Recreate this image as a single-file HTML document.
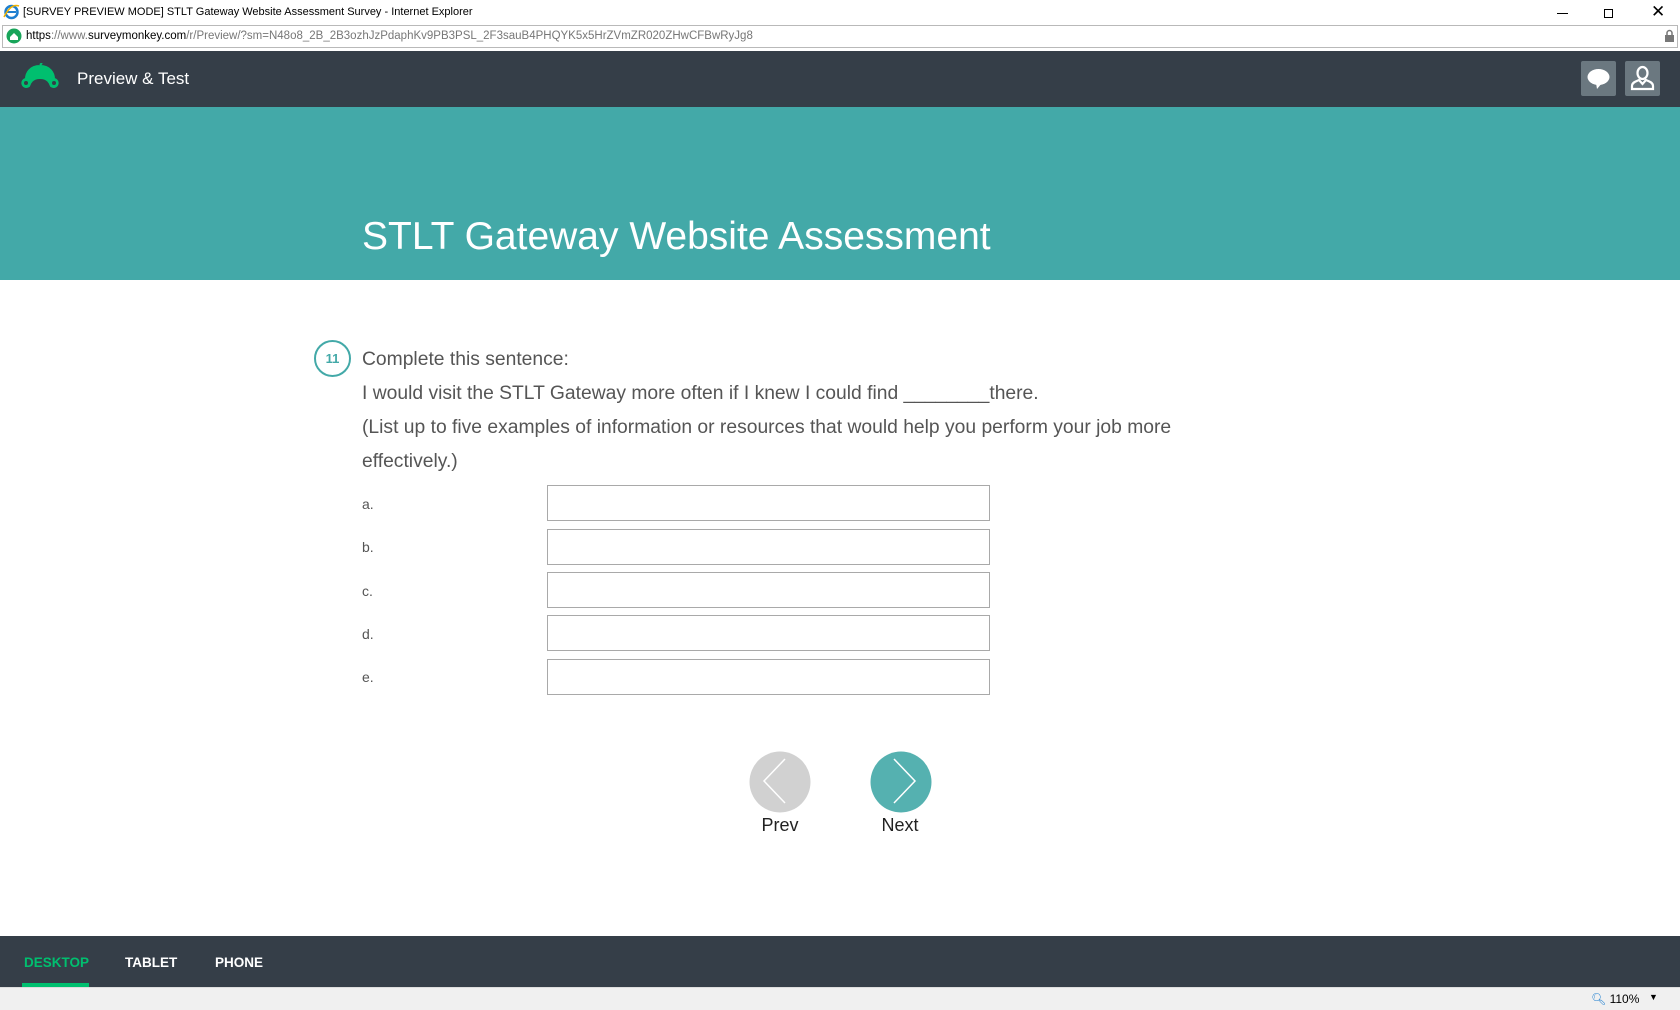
<!DOCTYPE html>
<html><head><meta charset="utf-8"><style>
*{margin:0;padding:0;box-sizing:border-box}
body{width:1680px;height:1010px;overflow:hidden;font-family:"Liberation Sans",sans-serif;background:#fff;position:relative}
.abs{position:absolute}
.tb{top:0;left:0;width:1680px;height:25px;background:#fff;font-size:11px;color:#000}
.ab{top:25px;left:2px;width:1676px;height:23px;border:1px solid #b9b9b9;font-size:11.5px;color:#777}
.nav{top:51px;left:0;width:1680px;height:56px;background:#353e48}
.hero{top:107px;left:0;width:1680px;height:173px;background:#43a9a8}
.q{left:362px;font-size:19.3px;color:#555;font-weight:300;white-space:nowrap}
.lab{left:362px;font-size:14px;color:#555}
.in{left:547px;width:443px;height:36px;border:1px solid #a9a9a9;background:#fff}
.foot{top:936px;left:0;width:1680px;height:51px;background:#353e48}
.st{top:987px;left:0;width:1680px;height:23px;background:#f0f0f0;border-top:1px solid #ddd}
.tab{top:955px;font-size:13.5px;font-weight:bold;color:#fff}
</style></head><body>
<div class="abs tb">
 <svg class="abs" style="left:3px;top:3px" width="17" height="17" viewBox="0 0 17 17"><circle cx="8.5" cy="9" r="6" fill="none" stroke="#1e7fd0" stroke-width="2.5"/><rect x="4" y="8" width="9" height="2" fill="#1e7fd0"/><path d="M1 14 Q8 0 16 3" stroke="#f4b400" stroke-width="1.5" fill="none"/></svg>
 <div class="abs" style="left:23px;top:6px">[SURVEY PREVIEW MODE] STLT Gateway Website Assessment Survey - Internet Explorer</div>
 <div class="abs" style="left:1557px;top:13px;width:11px;height:1px;background:#000"></div>
 <div class="abs" style="left:1604px;top:9px;width:9px;height:9px;border:1px solid #000"></div>
 <div class="abs" style="left:1651px;top:2px;font-size:17px">✕</div>
</div>
<div class="abs ab">
 <svg class="abs" style="left:3px;top:2px" width="16" height="16"><circle cx="8" cy="8" r="7.5" fill="#18a55a"/><path d="M4 9 L8 5 L12 9 V12 H4Z" fill="#fff"/></svg>
 <div class="abs" style="left:23px;top:4px"><span style="color:#000">https</span>://www.<span style="color:#000">surveymonkey.com</span>/r/Preview/?sm=N48o8_2B_2B3ozhJzPdaphKv9PB3PSL_2F3sauB4PHQYK5x5HrZVmZR020ZHwCFBwRyJg8</div>
 <svg class="abs" style="left:1661px;top:3px" width="11" height="14"><rect x="1" y="6" width="9" height="7" fill="#777"/><path d="M3 6 V4 a2.5 2.5 0 0 1 5 0 V6" stroke="#777" stroke-width="1.5" fill="none"/></svg>
</div>
<div class="abs nav">
 <svg class="abs" style="left:20px;top:12px" width="40" height="30" viewBox="0 0 40 30"><path d="M20 2 L22 0 M20 3 C10 3 6 10 6 16 A4 4 0 1 0 9 23 C10 20 12 15 20 15 C28 15 30 20 31 23 A4 4 0 1 0 34 16 C34 10 30 3 20 3Z" fill="#00bf6f" stroke="#00bf6f" stroke-width="2"/><circle cx="6" cy="20" r="2" fill="#353e48"/><circle cx="34" cy="20" r="2" fill="#353e48"/></svg>
 <div class="abs" style="left:77px;top:18px;font-size:17px;color:#fff">Preview &amp; Test</div>
 <div class="abs" style="left:1581px;top:10px;width:35px;height:35px;background:#6b7880;border-radius:2px"></div>
 <svg class="abs" style="left:1581px;top:10px" width="35" height="35"><ellipse cx="17.5" cy="16" rx="11" ry="8" fill="#fff"/><path d="M15 22 L16 28 L21 22Z" fill="#fff"/></svg>
 <div class="abs" style="left:1625px;top:10px;width:35px;height:35px;background:#6b7880;border-radius:2px"></div>
 <svg class="abs" style="left:1625px;top:10px" width="35" height="35" fill="none" stroke="#fff" stroke-width="2.2"><ellipse cx="17.5" cy="12" rx="5" ry="6"/><path d="M7 28 V25 C7 21 12 20 14 19 L17.5 23 L21 19 C23 20 28 21 28 25 V28Z"/></svg>
</div>
<div class="abs hero"><div class="abs" style="left:362px;top:108px;font-size:39px;color:#fff;font-weight:300">STLT Gateway Website Assessment</div></div>
<div class="abs" style="left:314px;top:340px;width:37px;height:37px;border:2px solid #43a9a8;border-radius:50%;color:#43a9a8;font-size:13px;font-weight:bold;text-align:center;line-height:33px">11</div>
<div class="abs q" style="top:349px">Complete this sentence:</div>
<div class="abs q" style="top:383px">I would visit the STLT Gateway more often if I knew I could find ________there.</div>
<div class="abs q" style="top:417px">(List up to five examples of information or resources that would help you perform your job more</div>
<div class="abs q" style="top:451px">effectively.)</div>
<div class="abs lab" style="top:496px">a.</div><div class="abs in" style="top:485px"></div>
<div class="abs lab" style="top:539px">b.</div><div class="abs in" style="top:529px"></div>
<div class="abs lab" style="top:583px">c.</div><div class="abs in" style="top:572px"></div>
<div class="abs lab" style="top:626px">d.</div><div class="abs in" style="top:615px"></div>
<div class="abs lab" style="top:669px">e.</div><div class="abs in" style="top:659px"></div>
<svg class="abs" style="left:749px;top:751px" width="62" height="62"><circle cx="31" cy="31" r="30.5" fill="#d1d1d1"/><path d="M36 8 L15 30 L36 52" stroke="#fff" stroke-width="1.5" fill="none"/></svg>
<svg class="abs" style="left:870px;top:751px" width="62" height="62"><circle cx="31" cy="31" r="30.5" fill="#55b1b0"/><path d="M24 8 L45 30 L24 52" stroke="#fff" stroke-width="1.5" fill="none"/></svg>
<div class="abs" style="left:740px;top:815px;width:80px;text-align:center;font-size:18px;color:#222">Prev</div>
<div class="abs" style="left:860px;top:815px;width:80px;text-align:center;font-size:18px;color:#222">Next</div>
<div class="abs foot">
 <div class="abs tab" style="left:24px;top:19px;color:#00bf6f">DESKTOP</div>
 <div class="abs" style="left:22px;top:47px;width:67px;height:4px;background:#00bf6f"></div>
 <div class="abs tab" style="left:125px;top:19px">TABLET</div>
 <div class="abs tab" style="left:215px;top:19px">PHONE</div>
</div>
<div class="abs st">
 <div class="abs" style="left:1591px;top:4px;font-size:12px;color:#000"><span style="color:#1e7fd0">&#x1F50D;&#xFE0E;</span> 110%</div>
 <div class="abs" style="left:1649px;top:4px;font-size:9px">▼</div>
</div>
</body></html>
